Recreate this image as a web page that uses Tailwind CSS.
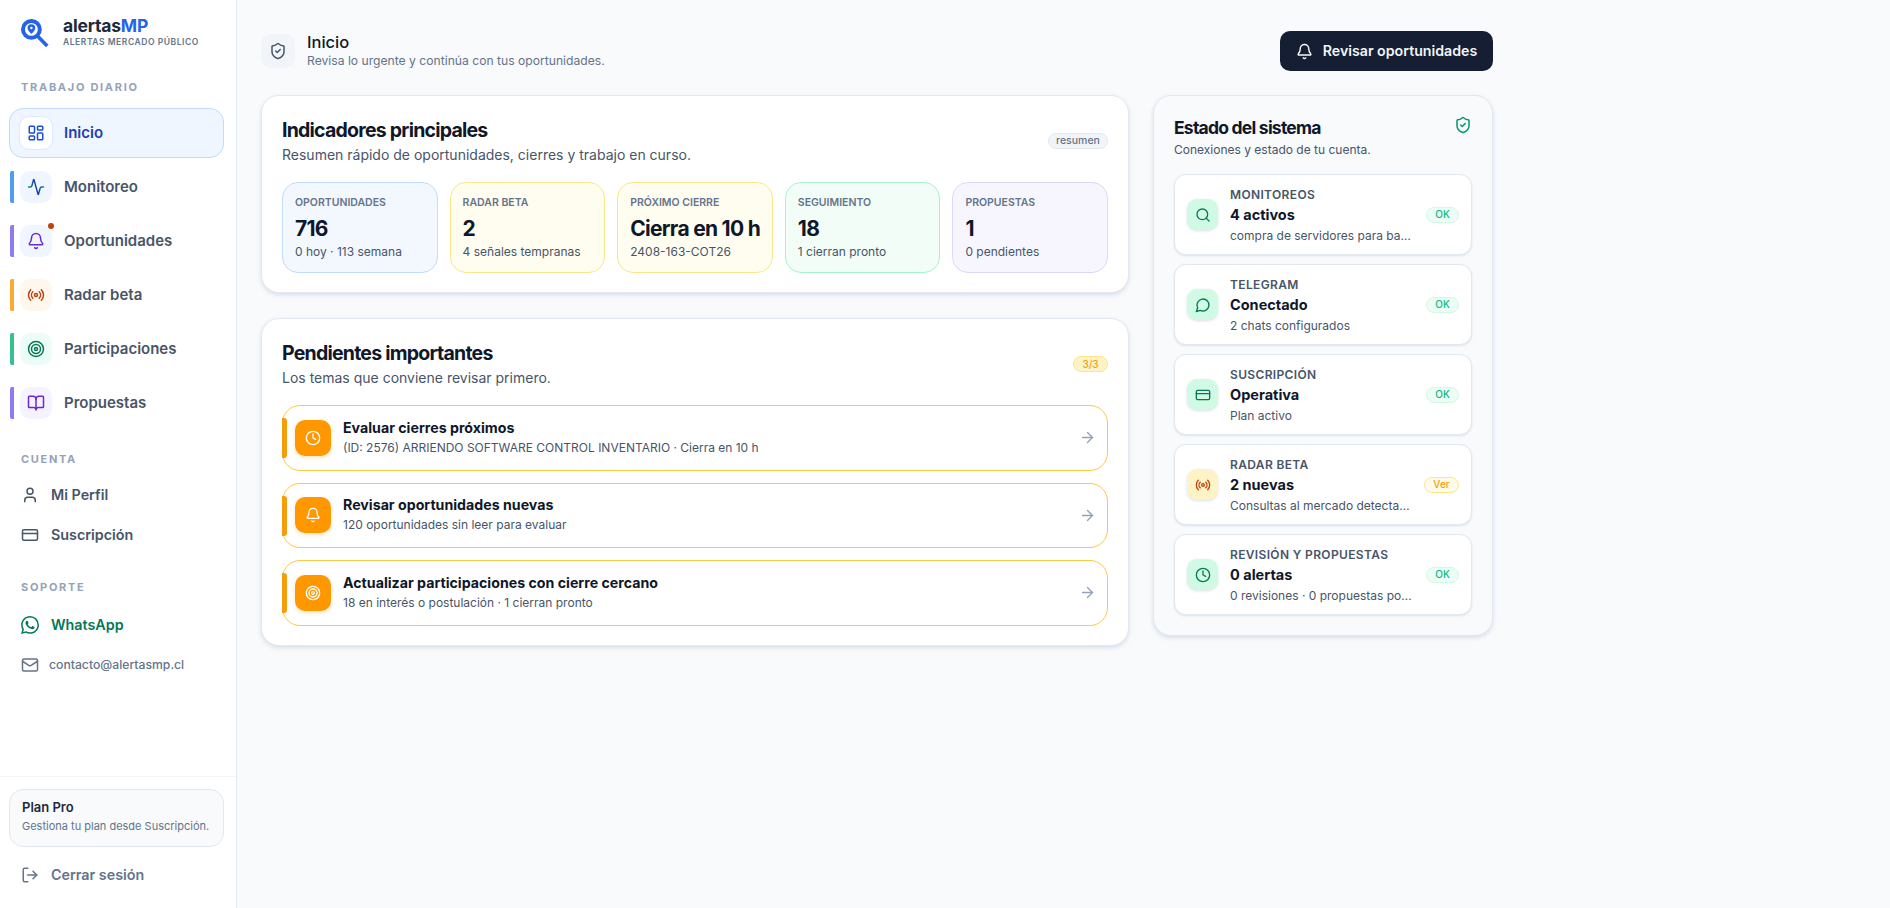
<!DOCTYPE html>
<html lang="es">
<head>
    <meta charset="UTF-8">
    <meta name="viewport" content="width=device-width, initial-scale=1.0">
    <script src="https://cdn.jsdelivr.net/npm/@tailwindcss/browser@4"></script>
    <title>Inicio - alertasMP</title>
</head>
<body class="bg-[#f8fafc] font-['Inter',sans-serif] text-[#0f172a] h-[908px] overflow-hidden">
<div class="flex h-[908px]">

    <!-- Sidebar -->
    <aside class="w-[237px] shrink-0 h-full bg-white border-r border-[#e2e8f0] flex flex-col">
        <div class="flex items-center gap-[14px] pl-[21px] pt-[4px] h-[62px]">
            <svg class="w-[28px] h-[29px] shrink-0" viewBox="0 0 28 29" fill="none">
                <circle cx="10.4" cy="10.4" r="8.4" stroke="#2563eb" stroke-width="4"/>
                <path d="M17 17.5l8 8.2" stroke="#2563eb" stroke-width="3.6" stroke-linecap="square"/>
                <path d="M10.4 5.2a3.9 3.9 0 0 0-3.9 3.9c0 2.6 3.9 5.9 3.9 5.9s3.9-3.3 3.9-5.9a3.9 3.9 0 0 0-3.9-3.9z" fill="#2563eb"/>
                <circle cx="10.4" cy="9" r="1.2" fill="#fff"/>
            </svg>
            <div class="-mt-[2px]">
                <div class="text-[17.5px] leading-[20px] font-bold tracking-[-0.2px] text-[#1e293b]">alertas<span class="text-[#2563eb]">MP</span></div>
                <div class="text-[8.5px] leading-[11px] font-semibold tracking-[0.55px] text-[#64748b] mt-[1px]">ALERTAS MERCADO PÚBLICO</div>
            </div>
        </div>

        <div class="pl-[21px] mt-[18px] text-[11px] leading-[14px] font-bold tracking-[1.7px] text-[#94a3b8]">TRABAJO DIARIO</div>

        <nav class="mt-[14px] flex flex-col">
            <a class="ml-[9px] mr-[12px] h-[50px] mb-[13px] flex items-center gap-[11px] pl-[9px] rounded-[14px] bg-[#eff6ff] border border-[#bfdbfe]">
                <span class="w-[34px] h-[34px] rounded-[10px] bg-white border border-[#dbeafe] flex items-center justify-center">
                    <svg class="w-[18px] h-[18px]" viewBox="0 0 24 24" fill="none" stroke="#1d4ed8" stroke-width="2" stroke-linecap="round" stroke-linejoin="round"><rect width="7" height="9" x="3" y="3" rx="1"/><rect width="7" height="5" x="14" y="3" rx="1"/><rect width="7" height="9" x="14" y="12" rx="1"/><rect width="7" height="5" x="3" y="16" rx="1"/></svg>
                </span>
                <span class="text-[15px] font-semibold text-[#1e40af]">Inicio</span>
            </a>
            <a class="ml-[10px] h-[32px] mb-[22px] flex items-center">
                <span class="w-[4px] h-[32px] rounded-l-[2px] bg-[#4f9cf0]"></span>
                <span class="ml-[6px] w-[32px] h-[32px] rounded-[10px] bg-[#eff6ff] flex items-center justify-center">
                    <svg class="w-[18px] h-[18px]" viewBox="0 0 24 24" fill="none" stroke-width="2" stroke-linecap="round" stroke-linejoin="round"><defs><linearGradient id="pulse" x1="0" x2="1" y1="0" y2="0"><stop offset="0" stop-color="#059669"/><stop offset="0.35" stop-color="#1e40af"/><stop offset="0.7" stop-color="#1e40af"/><stop offset="1" stop-color="#059669"/></linearGradient></defs><path stroke="url(#pulse)" d="M22 12h-2.48a2 2 0 0 0-1.93 1.46l-2.35 8.36a.25.25 0 0 1-.48 0L9.24 2.18a.25.25 0 0 0-.48 0l-2.35 8.36A2 2 0 0 1 4.49 12H2"/></svg>
                </span>
                <span class="ml-[12px] text-[15px] font-semibold text-[#475569]">Monitoreo</span>
            </a>
            <a class="ml-[10px] h-[32px] mb-[22px] flex items-center">
                <span class="w-[4px] h-[32px] rounded-l-[2px] bg-[#8b7cf6]"></span>
                <span class="relative ml-[6px] w-[32px] h-[32px] rounded-[10px] bg-[#eff6ff] flex items-center justify-center">
                    <svg class="w-[18px] h-[18px]" viewBox="0 0 24 24" fill="none" stroke="#6d28d9" stroke-width="2" stroke-linecap="round" stroke-linejoin="round"><path d="M10.268 21a2 2 0 0 0 3.464 0"/><path d="M3.262 15.326A1 1 0 0 0 4 17h16a1 1 0 0 0 .74-1.673C19.41 13.956 18 12.499 18 8A6 6 0 0 0 6 8c0 4.499-1.411 5.956-2.738 7.326"/></svg>
                    <span class="absolute top-[-2px] right-[-2px] w-[6px] h-[6px] rounded-full bg-[#c2410c]"></span>
                </span>
                <span class="ml-[12px] text-[15px] font-semibold text-[#475569]">Oportunidades</span>
            </a>
            <a class="ml-[10px] h-[32px] mb-[22px] flex items-center">
                <span class="w-[4px] h-[32px] rounded-l-[2px] bg-[#fbab2d]"></span>
                <span class="ml-[6px] w-[32px] h-[32px] rounded-[10px] bg-[#fff7ed] flex items-center justify-center">
                    <svg class="w-[18px] h-[18px]" viewBox="0 0 24 24" fill="none" stroke="#c2410c" stroke-width="2" stroke-linecap="round" stroke-linejoin="round"><path d="M16.247 7.761a6 6 0 0 1 0 8.478"/><path d="M19.075 4.933a10 10 0 0 1 0 14.134"/><path d="M4.925 19.067a10 10 0 0 1 0-14.134"/><path d="M7.753 16.239a6 6 0 0 1 0-8.478"/><circle cx="12" cy="12" r="2"/></svg>
                </span>
                <span class="ml-[12px] text-[15px] font-semibold text-[#475569]">Radar beta</span>
            </a>
            <a class="ml-[10px] h-[32px] mb-[22px] flex items-center">
                <span class="w-[4px] h-[32px] rounded-l-[2px] bg-[#34c38f]"></span>
                <span class="ml-[6px] w-[32px] h-[32px] rounded-[10px] bg-[#ecfdf5] flex items-center justify-center">
                    <svg class="w-[18px] h-[18px]" viewBox="0 0 24 24" fill="none" stroke="#047857" stroke-width="2" stroke-linecap="round" stroke-linejoin="round"><circle cx="12" cy="12" r="10"/><circle cx="12" cy="12" r="6"/><circle cx="12" cy="12" r="2"/></svg>
                </span>
                <span class="ml-[12px] text-[15px] font-semibold text-[#475569]">Participaciones</span>
            </a>
            <a class="ml-[10px] h-[32px] flex items-center">
                <span class="w-[4px] h-[32px] rounded-l-[2px] bg-[#8b7cf6]"></span>
                <span class="ml-[6px] w-[32px] h-[32px] rounded-[10px] bg-[#f5f3ff] flex items-center justify-center">
                    <svg class="w-[18px] h-[18px]" viewBox="0 0 24 24" fill="none" stroke="#6d28d9" stroke-width="2" stroke-linecap="round" stroke-linejoin="round"><path d="M12 7v14"/><path d="M3 18a1 1 0 0 1-1-1V4a1 1 0 0 1 1-1h5a4 4 0 0 1 4 4 4 4 0 0 1 4-4h5a1 1 0 0 1 1 1v13a1 1 0 0 1-1 1h-6a3 3 0 0 0-3 3 3 3 0 0 0-3-3z"/></svg>
                </span>
                <span class="ml-[12px] text-[15px] font-semibold text-[#475569]">Propuestas</span>
            </a>
        </nav>

        <div class="pl-[21px] mt-[33px] text-[11px] leading-[14px] font-bold tracking-[1.7px] text-[#94a3b8]">CUENTA</div>
        <a class="mt-[9px] pl-[21px] h-[40px] flex items-center gap-[12px] text-[14.3px] font-semibold text-[#475569]">
            <svg class="w-[18px] h-[18px]" viewBox="0 0 24 24" fill="none" stroke="#475569" stroke-width="2" stroke-linecap="round" stroke-linejoin="round"><path d="M19 21v-2a4 4 0 0 0-4-4H9a4 4 0 0 0-4 4v2"/><circle cx="12" cy="7" r="4"/></svg>
            Mi Perfil
        </a>
        <a class="pl-[21px] h-[40px] flex items-center gap-[12px] text-[14.3px] font-semibold text-[#475569]">
            <svg class="w-[18px] h-[18px]" viewBox="0 0 24 24" fill="none" stroke="#475569" stroke-width="2" stroke-linecap="round" stroke-linejoin="round"><rect width="20" height="14" x="2" y="5" rx="2"/><line x1="2" x2="22" y1="10" y2="10"/></svg>
            Suscripción
        </a>

        <div class="pl-[21px] mt-[25px] text-[11px] leading-[14px] font-bold tracking-[1.7px] text-[#94a3b8]">SOPORTE</div>
        <a class="mt-[11px] pl-[21px] h-[40px] flex items-center gap-[12px] text-[14.3px] font-semibold text-[#047857]">
            <svg class="w-[18px] h-[18px]" viewBox="0 0 24 24" fill="#047857"><path d="M17.472 14.382c-.297-.149-1.758-.867-2.03-.967-.273-.099-.471-.148-.67.15-.197.297-.767.966-.94 1.164-.173.199-.347.223-.644.075-.297-.15-1.255-.463-2.39-1.475-.883-.788-1.48-1.761-1.653-2.059-.173-.297-.018-.458.13-.606.134-.133.298-.347.446-.52.149-.174.198-.298.298-.497.099-.198.05-.371-.025-.52-.075-.149-.669-1.612-.916-2.207-.242-.579-.487-.5-.669-.51-.173-.008-.371-.01-.57-.01-.198 0-.52.074-.792.372-.272.297-1.04 1.016-1.04 2.479 0 1.462 1.065 2.875 1.213 3.074.149.198 2.096 3.2 5.077 4.487.709.306 1.262.489 1.694.625.712.227 1.36.195 1.871.118.571-.085 1.758-.719 2.006-1.413.248-.694.248-1.289.173-1.413-.074-.124-.272-.198-.57-.347m-5.421 7.403h-.004a9.87 9.87 0 01-5.031-1.378l-.361-.214-3.741.982.998-3.648-.235-.374a9.86 9.86 0 01-1.51-5.26c.001-5.45 4.436-9.884 9.888-9.884 2.64 0 5.122 1.03 6.988 2.898a9.825 9.825 0 012.893 6.994c-.003 5.45-4.437 9.884-9.885 9.884m8.413-18.297A11.815 11.815 0 0012.05 0C5.495 0 .16 5.335.157 11.892c0 2.096.547 4.142 1.588 5.945L.057 24l6.305-1.654a11.882 11.882 0 005.683 1.448h.005c6.554 0 11.89-5.335 11.893-11.893a11.821 11.821 0 00-3.48-8.413z"/></svg>
            WhatsApp
        </a>
        <a class="pl-[21px] h-[40px] flex items-center gap-[10px] text-[12.2px] font-medium text-[#64748b]">
            <svg class="w-[18px] h-[18px]" viewBox="0 0 24 24" fill="none" stroke="#64748b" stroke-width="2" stroke-linecap="round" stroke-linejoin="round"><rect width="20" height="16" x="2" y="4" rx="2"/><path d="m22 7-8.97 5.7a1.94 1.94 0 0 1-2.06 0L2 7"/></svg>
            contacto@alertasmp.cl
        </a>

        <div class="mt-auto border-t border-[#f1f5f9] pt-[12px] pl-[9px] pr-[12px] h-[132px]">
            <div class="h-[58px] rounded-[14px] bg-[#f8fafc] border border-[#e2e8f0] pl-[12px] pt-[9px]">
                <div class="text-[13px] leading-[17px] font-semibold text-[#1e293b]">Plan Pro</div>
                <div class="text-[11px] leading-[15px] mt-[3px] text-[#64748b]">Gestiona tu plan desde Suscripción.</div>
            </div>
            <a class="mt-[8px] pl-[12px] h-[40px] flex items-center gap-[12px] text-[14.3px] font-semibold text-[#64748b]">
                <svg class="w-[18px] h-[18px]" viewBox="0 0 24 24" fill="none" stroke="#64748b" stroke-width="2" stroke-linecap="round" stroke-linejoin="round"><path d="m16 17 5-5-5-5"/><path d="M21 12H9"/><path d="M9 21H5a2 2 0 0 1-2-2V5a2 2 0 0 1 2-2h4"/></svg>
                Cerrar sesión
            </a>
        </div>
    </aside>

    <!-- Main -->
    <main class="flex-1 pl-[24px] pr-[397px]">
        <header class="h-[95px] flex items-start justify-between pt-[31px]">
            <div class="flex items-start gap-[12px] pt-[3px]">
                <span class="w-[34px] h-[34px] rounded-[10px] bg-[#f1f5f9] flex items-center justify-center">
                    <svg class="w-[18px] h-[18px]" viewBox="0 0 24 24" fill="none" stroke="#475569" stroke-width="2" stroke-linecap="round" stroke-linejoin="round"><path d="M20 13c0 5-3.5 7.5-7.66 8.95a1 1 0 0 1-.67-.01C7.5 20.5 4 18 4 13V6a1 1 0 0 1 1-1c2 0 4.5-1.2 6.24-2.72a1.17 1.17 0 0 1 1.52 0C14.51 3.81 17 5 19 5a1 1 0 0 1 1 1z"/><path d="m9 12 2 2 4-4"/></svg>
                </span>
                <div class="-mt-[1px]">
                    <div class="text-[16.5px] leading-[18px] font-medium text-[#0f172a]">Inicio</div>
                    <div class="text-[12.15px] leading-[16px] mt-[2px] text-[#64748b]">Revisa lo urgente y continúa con tus oportunidades.</div>
                </div>
            </div>
            <button class="h-[40px] w-[213px] rounded-[10px] bg-[#161e33] flex items-center justify-center gap-[10px] text-[14.2px] font-semibold text-[#f1f5f9]">
                <svg class="w-[17px] h-[17px]" viewBox="0 0 24 24" fill="none" stroke="#f8fafc" stroke-width="2" stroke-linecap="round" stroke-linejoin="round"><path d="M10.268 21a2 2 0 0 0 3.464 0"/><path d="M3.262 15.326A1 1 0 0 0 4 17h16a1 1 0 0 0 .74-1.673C19.41 13.956 18 12.499 18 8A6 6 0 0 0 6 8c0 4.499-1.411 5.956-2.738 7.326"/></svg>
                Revisar oportunidades
            </button>
        </header>

        <div class="grid grid-cols-[868px_340px] gap-[24px] items-start">
            <div class="flex flex-col gap-[25px]">

                <!-- Indicadores -->
                <section class="h-[198px] bg-white rounded-[18px] border border-[#e2e8f0] shadow-[0_2px_4px_rgba(148,163,184,0.3)] px-[20px] pt-[21px]">
                    <div class="flex items-start justify-between">
                        <div>
                            <h2 class="text-[19.5px] leading-[26px] font-bold tracking-[-0.77px] text-[#0f172a]">Indicadores principales</h2>
                            <p class="text-[14px] leading-[20px] mt-[2px] text-[#475569]">Resumen rápido de oportunidades, cierres y trabajo en curso.</p>
                        </div>
                        <span class="mt-[16px] h-[16px] w-[60px] rounded-full bg-[#f1f5f9] border border-[#e2e8f0] flex items-center justify-center text-[10.5px] font-medium text-[#64748b]">resumen</span>
                    </div>
                    <div class="grid grid-cols-5 gap-[12px] mt-[17px]">
                        <div class="h-[91px] rounded-[16px] bg-[#f3f8ff] border border-[#bfdbfe] pl-[12px] pt-[13px]">
                            <div class="text-[10.5px] leading-[14px] font-semibold text-[#64748b]">OPORTUNIDADES</div>
                            <div class="text-[21px] leading-[28px] mt-[5px] font-bold tracking-[-0.7px] text-[#0f172a]">716</div>
                            <div class="text-[12px] leading-[17px] text-[#475569]">0 hoy · 113 semana</div>
                        </div>
                        <div class="h-[91px] rounded-[16px] bg-[#fffdf0] border border-[#fde68a] pl-[12px] pt-[13px]">
                            <div class="text-[10.5px] leading-[14px] font-semibold text-[#64748b]">RADAR BETA</div>
                            <div class="text-[21px] leading-[28px] mt-[5px] font-bold tracking-[-0.7px] text-[#0f172a]">2</div>
                            <div class="text-[12px] leading-[17px] text-[#475569]">4 señales tempranas</div>
                        </div>
                        <div class="h-[91px] rounded-[16px] bg-[#fffdf0] border border-[#fde68a] pl-[12px] pt-[13px]">
                            <div class="text-[10.5px] leading-[14px] font-semibold text-[#64748b]">PRÓXIMO CIERRE</div>
                            <div class="text-[21px] leading-[28px] mt-[5px] font-bold tracking-[-0.7px] whitespace-nowrap text-[#0f172a]">Cierra en 10 h</div>
                            <div class="text-[12px] leading-[17px] text-[#475569]">2408-163-COT26</div>
                        </div>
                        <div class="h-[91px] rounded-[16px] bg-[#f2fdf8] border border-[#a7f3d0] pl-[12px] pt-[13px]">
                            <div class="text-[10.5px] leading-[14px] font-semibold text-[#64748b]">SEGUIMIENTO</div>
                            <div class="text-[21px] leading-[28px] mt-[5px] font-bold tracking-[-0.7px] text-[#0f172a]">18</div>
                            <div class="text-[12px] leading-[17px] text-[#475569]">1 cierran pronto</div>
                        </div>
                        <div class="h-[91px] rounded-[16px] bg-[#f7f6ff] border border-[#ddd6fe] pl-[12px] pt-[13px]">
                            <div class="text-[10.5px] leading-[14px] font-semibold text-[#64748b]">PROPUESTAS</div>
                            <div class="text-[21px] leading-[28px] mt-[5px] font-bold tracking-[-0.7px] text-[#0f172a]">1</div>
                            <div class="text-[12px] leading-[17px] text-[#475569]">0 pendientes</div>
                        </div>
                    </div>
                </section>

                <!-- Pendientes -->
                <section class="h-[328px] bg-white rounded-[18px] border border-[#e2e8f0] shadow-[0_2px_4px_rgba(148,163,184,0.3)] px-[20px] pt-[21px]">
                    <div class="flex items-start justify-between">
                        <div>
                            <h2 class="text-[19.5px] leading-[26px] font-bold tracking-[-0.77px] text-[#0f172a]">Pendientes importantes</h2>
                            <p class="text-[14px] leading-[20px] mt-[2px] text-[#475569]">Los temas que conviene revisar primero.</p>
                        </div>
                        <span class="mt-[16px] h-[16px] w-[35px] rounded-full bg-[#fef3c7] border border-[#fde68a] flex items-center justify-center text-[10px] font-medium text-[#f59e0b]">3/3</span>
                    </div>
                    <div class="flex flex-col gap-[12px] mt-[17px]">
                        <a class="relative h-[65.5px] rounded-[18px] bg-white border border-[#fbc943] flex items-center pl-[12px] pr-[11px]">
                            <span class="absolute left-[-1px] top-[12px] w-[5px] h-[40px] rounded-r-[3px] bg-[#f59e0b]"></span>
                            <span class="w-[36px] h-[36px] rounded-[10px] bg-[#ff9800] shadow-[0_2px_4px_rgba(245,158,11,0.25)] flex items-center justify-center">
                                <svg class="w-[16px] h-[16px]" viewBox="0 0 24 24" fill="none" stroke="#fff" stroke-width="2" stroke-linecap="round" stroke-linejoin="round"><circle cx="12" cy="12" r="10"/><path d="M12 6v6l4 2"/></svg>
                            </span>
                            <div class="ml-[12px] flex-1 pb-[2px]">
                                <div class="text-[14.2px] leading-[20px] font-bold text-[#0f172a]">Evaluar cierres próximos</div>
                                <div class="text-[12px] leading-[17px] mt-[1px] text-[#475569]">(ID: 2576) ARRIENDO SOFTWARE CONTROL INVENTARIO · Cierra en 10 h</div>
                            </div>
                            <svg class="w-[17px] h-[17px]" viewBox="0 0 24 24" fill="none" stroke="#94a3b8" stroke-width="2" stroke-linecap="round" stroke-linejoin="round"><path d="M5 12h14"/><path d="m12 5 7 7-7 7"/></svg>
                        </a>
                        <a class="relative h-[65.5px] rounded-[18px] bg-white border border-[#fbc943] flex items-center pl-[12px] pr-[11px]">
                            <span class="absolute left-[-1px] top-[12px] w-[5px] h-[40px] rounded-r-[3px] bg-[#f59e0b]"></span>
                            <span class="w-[36px] h-[36px] rounded-[10px] bg-[#ff9800] shadow-[0_2px_4px_rgba(245,158,11,0.25)] flex items-center justify-center">
                                <svg class="w-[16px] h-[16px]" viewBox="0 0 24 24" fill="none" stroke="#fff" stroke-width="2" stroke-linecap="round" stroke-linejoin="round"><path d="M10.268 21a2 2 0 0 0 3.464 0"/><path d="M3.262 15.326A1 1 0 0 0 4 17h16a1 1 0 0 0 .74-1.673C19.41 13.956 18 12.499 18 8A6 6 0 0 0 6 8c0 4.499-1.411 5.956-2.738 7.326"/></svg>
                            </span>
                            <div class="ml-[12px] flex-1 pb-[2px]">
                                <div class="text-[14.2px] leading-[20px] font-bold text-[#0f172a]">Revisar oportunidades nuevas</div>
                                <div class="text-[12px] leading-[17px] mt-[1px] text-[#475569]">120 oportunidades sin leer para evaluar</div>
                            </div>
                            <svg class="w-[17px] h-[17px]" viewBox="0 0 24 24" fill="none" stroke="#94a3b8" stroke-width="2" stroke-linecap="round" stroke-linejoin="round"><path d="M5 12h14"/><path d="m12 5 7 7-7 7"/></svg>
                        </a>
                        <a class="relative h-[65.5px] rounded-[18px] bg-white border border-[#fbc943] flex items-center pl-[12px] pr-[11px]">
                            <span class="absolute left-[-1px] top-[12px] w-[5px] h-[40px] rounded-r-[3px] bg-[#f59e0b]"></span>
                            <span class="w-[36px] h-[36px] rounded-[10px] bg-[#ff9800] shadow-[0_2px_4px_rgba(245,158,11,0.25)] flex items-center justify-center">
                                <svg class="w-[16px] h-[16px]" viewBox="0 0 24 24" fill="none" stroke="#fff" stroke-width="2" stroke-linecap="round" stroke-linejoin="round"><circle cx="12" cy="12" r="10"/><circle cx="12" cy="12" r="6"/><circle cx="12" cy="12" r="2"/></svg>
                            </span>
                            <div class="ml-[12px] flex-1 pb-[2px]">
                                <div class="text-[14.2px] leading-[20px] font-bold text-[#0f172a]">Actualizar participaciones con cierre cercano</div>
                                <div class="text-[12px] leading-[17px] mt-[1px] text-[#475569]">18 en interés o postulación · 1 cierran pronto</div>
                            </div>
                            <svg class="w-[17px] h-[17px]" viewBox="0 0 24 24" fill="none" stroke="#94a3b8" stroke-width="2" stroke-linecap="round" stroke-linejoin="round"><path d="M5 12h14"/><path d="m12 5 7 7-7 7"/></svg>
                        </a>
                    </div>
                </section>
            </div>

            <!-- Estado del sistema -->
            <section class="h-[541px] rounded-[18px] bg-[#f8fafc] border border-[#e2e8f0] shadow-[0_2px_4px_rgba(148,163,184,0.3)] px-[20px] pt-[20px]">
                <div class="flex items-start justify-between">
                    <div>
                        <h2 class="text-[17.5px] leading-[23px] font-bold tracking-[-0.77px] text-[#0f172a]">Estado del sistema</h2>
                        <p class="text-[12px] leading-[17px] mt-[2px] text-[#475569]">Conexiones y estado de tu cuenta.</p>
                    </div>
                    <svg class="w-[18px] h-[18px]" viewBox="0 0 24 24" fill="none" stroke="#059669" stroke-width="2" stroke-linecap="round" stroke-linejoin="round"><path d="M20 13c0 5-3.5 7.5-7.66 8.95a1 1 0 0 1-.67-.01C7.5 20.5 4 18 4 13V6a1 1 0 0 1 1-1c2 0 4.5-1.2 6.24-2.72a1.17 1.17 0 0 1 1.52 0C14.51 3.81 17 5 19 5a1 1 0 0 1 1 1z"/><path d="m9 12 2 2 4-4"/></svg>
                </div>
                <div class="flex flex-col gap-[9px] mt-[16px]">
                    <div class="h-[81px] rounded-[12px] bg-white border border-[#e2e8f0] shadow-[0_1px_2px_rgba(148,163,184,0.25)] flex items-center pl-[12px] pr-[12px]">
                        <span class="shrink-0 w-[31px] h-[31px] rounded-[10px] bg-[#d1fae5] shadow-[0_1px_3px_rgba(148,163,184,0.35)] flex items-center justify-center">
                            <svg class="w-[16px] h-[16px]" viewBox="0 0 24 24" fill="none" stroke="#047857" stroke-width="2" stroke-linecap="round" stroke-linejoin="round"><path d="m21 21-4.34-4.34"/><circle cx="11" cy="11" r="8"/></svg>
                        </span>
                        <div class="ml-[12px] flex-1 min-w-0">
                            <div class="text-[12px] leading-[17px] font-semibold tracking-[0.35px] text-[#475569]">MONITOREOS</div>
                            <div class="text-[14.5px] leading-[20px] mt-[2px] font-bold text-[#0f172a]">4 activos</div>
                            <div class="text-[12px] leading-[17px] mt-[2px] text-[#475569] truncate">compra de servidores para backup</div>
                        </div>
                        <span class="shrink-0 ml-[12px] h-[16px] w-[33px] rounded-full bg-[#ecfdf5] border border-[#d1fae5] flex items-center justify-center text-[10px] font-medium text-[#10b981]">OK</span>
                    </div>
                    <div class="h-[81px] rounded-[12px] bg-white border border-[#e2e8f0] shadow-[0_1px_2px_rgba(148,163,184,0.25)] flex items-center pl-[12px] pr-[12px]">
                        <span class="shrink-0 w-[31px] h-[31px] rounded-[10px] bg-[#d1fae5] shadow-[0_1px_3px_rgba(148,163,184,0.35)] flex items-center justify-center">
                            <svg class="w-[16px] h-[16px]" viewBox="0 0 24 24" fill="none" stroke="#047857" stroke-width="2" stroke-linecap="round" stroke-linejoin="round"><path d="M7.9 20A9 9 0 1 0 4 16.1L2 22Z"/></svg>
                        </span>
                        <div class="ml-[12px] flex-1 min-w-0">
                            <div class="text-[12px] leading-[17px] font-semibold tracking-[0.35px] text-[#475569]">TELEGRAM</div>
                            <div class="text-[14.5px] leading-[20px] mt-[2px] font-bold text-[#0f172a]">Conectado</div>
                            <div class="text-[12px] leading-[17px] mt-[2px] text-[#475569] truncate">2 chats configurados</div>
                        </div>
                        <span class="shrink-0 ml-[12px] h-[16px] w-[33px] rounded-full bg-[#ecfdf5] border border-[#d1fae5] flex items-center justify-center text-[10px] font-medium text-[#10b981]">OK</span>
                    </div>
                    <div class="h-[81px] rounded-[12px] bg-white border border-[#e2e8f0] shadow-[0_1px_2px_rgba(148,163,184,0.25)] flex items-center pl-[12px] pr-[12px]">
                        <span class="shrink-0 w-[31px] h-[31px] rounded-[10px] bg-[#d1fae5] shadow-[0_1px_3px_rgba(148,163,184,0.35)] flex items-center justify-center">
                            <svg class="w-[16px] h-[16px]" viewBox="0 0 24 24" fill="none" stroke="#047857" stroke-width="2" stroke-linecap="round" stroke-linejoin="round"><rect width="20" height="14" x="2" y="5" rx="2"/><line x1="2" x2="22" y1="10" y2="10"/></svg>
                        </span>
                        <div class="ml-[12px] flex-1 min-w-0">
                            <div class="text-[12px] leading-[17px] font-semibold tracking-[0.35px] text-[#475569]">SUSCRIPCIÓN</div>
                            <div class="text-[14.5px] leading-[20px] mt-[2px] font-bold text-[#0f172a]">Operativa</div>
                            <div class="text-[12px] leading-[17px] mt-[2px] text-[#475569] truncate">Plan activo</div>
                        </div>
                        <span class="shrink-0 ml-[12px] h-[16px] w-[33px] rounded-full bg-[#ecfdf5] border border-[#d1fae5] flex items-center justify-center text-[10px] font-medium text-[#10b981]">OK</span>
                    </div>
                    <div class="h-[81px] rounded-[12px] bg-white border border-[#e2e8f0] shadow-[0_1px_2px_rgba(148,163,184,0.25)] flex items-center pl-[12px] pr-[12px]">
                        <span class="shrink-0 w-[31px] h-[31px] rounded-[10px] bg-[#fef3c7] shadow-[0_1px_3px_rgba(148,163,184,0.35)] flex items-center justify-center">
                            <svg class="w-[16px] h-[16px]" viewBox="0 0 24 24" fill="none" stroke="#c2410c" stroke-width="2" stroke-linecap="round" stroke-linejoin="round"><path d="M16.247 7.761a6 6 0 0 1 0 8.478"/><path d="M19.075 4.933a10 10 0 0 1 0 14.134"/><path d="M4.925 19.067a10 10 0 0 1 0-14.134"/><path d="M7.753 16.239a6 6 0 0 1 0-8.478"/><circle cx="12" cy="12" r="2"/></svg>
                        </span>
                        <div class="ml-[12px] flex-1 min-w-0">
                            <div class="text-[12px] leading-[17px] font-semibold tracking-[0.35px] text-[#475569]">RADAR BETA</div>
                            <div class="text-[14.5px] leading-[20px] mt-[2px] font-bold text-[#0f172a]">2 nuevas</div>
                            <div class="text-[12px] leading-[17px] mt-[2px] text-[#475569] truncate">Consultas al mercado detectadas</div>
                        </div>
                        <span class="shrink-0 ml-[12px] h-[16px] w-[35px] rounded-full bg-[#fffbeb] border border-[#fde68a] flex items-center justify-center text-[10px] font-medium text-[#f59e0b]">Ver</span>
                    </div>
                    <div class="h-[81px] rounded-[12px] bg-white border border-[#e2e8f0] shadow-[0_1px_2px_rgba(148,163,184,0.25)] flex items-center pl-[12px] pr-[12px]">
                        <span class="shrink-0 w-[31px] h-[31px] rounded-[10px] bg-[#d1fae5] shadow-[0_1px_3px_rgba(148,163,184,0.35)] flex items-center justify-center">
                            <svg class="w-[16px] h-[16px]" viewBox="0 0 24 24" fill="none" stroke="#047857" stroke-width="2" stroke-linecap="round" stroke-linejoin="round"><circle cx="12" cy="12" r="10"/><path d="M12 6v6l4 2"/></svg>
                        </span>
                        <div class="ml-[12px] flex-1 min-w-0">
                            <div class="text-[12px] leading-[17px] font-semibold tracking-[0.35px] text-[#475569]">REVISIÓN Y PROPUESTAS</div>
                            <div class="text-[14.5px] leading-[20px] mt-[2px] font-bold text-[#0f172a]">0 alertas</div>
                            <div class="text-[12px] leading-[17px] mt-[2px] text-[#475569] truncate">0 revisiones · 0 propuestas por enviar</div>
                        </div>
                        <span class="shrink-0 ml-[12px] h-[16px] w-[33px] rounded-full bg-[#ecfdf5] border border-[#d1fae5] flex items-center justify-center text-[10px] font-medium text-[#10b981]">OK</span>
                    </div>
                </div>
            </section>
        </div>
    </main>
</div>
</body>
</html>
